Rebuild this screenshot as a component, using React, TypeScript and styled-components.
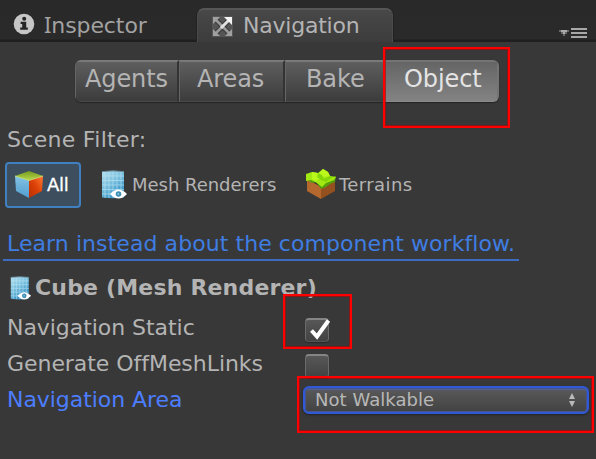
import React from "react";
import styled, { createGlobalStyle } from "styled-components";

const GlobalStyle = createGlobalStyle`
  * { box-sizing: border-box; }
  body { margin: 0; background: #383838; }
`;

const Window = styled.main`
  position: relative;
  width: 596px;
  height: 459px;
  overflow: hidden;
  background: #383838;
  color: #b4b4b4;
  font: 22px/31px "DejaVu Sans", Verdana, sans-serif;
  white-space: nowrap;
`;

const TabBar = styled.header`
  display: flex;
  align-items: flex-end;
  height: 42px;
  background: linear-gradient(#292929, #2a2a2a 39px, #1f1f1f 40px);
`;

const Tab = styled.div<{ $active?: boolean }>`
  display: flex;
  align-items: flex-start;
  width: ${(p) => (p.$active ? 196 : 197)}px;
  height: ${(p) => (p.$active ? 34 : 42)}px;
  padding: ${(p) => (p.$active ? "0 0 0 14px" : "10px 0 0 13px")};
  color: ${(p) => (p.$active ? "#b4b4b4" : "#a2a2a2")};
  ${(p) =>
    p.$active &&
    `background: linear-gradient(#484848, #3c3c3c);
     border: 1px solid #4a4a4a;
     border-top: 2px solid #565656;
     border-bottom: 0;
     border-radius: 7px 7px 0 0;
     box-shadow: -1px 0 #222, 1px 0 #222;`}
`;

const TabIcon = styled.span<{ $top: number }>`
  display: flex;
  padding-top: ${(p) => p.$top}px;
`;

const TabText = styled.span<{ $left: number; $spacing: number }>`
  height: 31px;
  margin-left: ${(p) => p.$left}px;
  letter-spacing: ${(p) => p.$spacing}px;
`;

const SerifCapital = styled.span`
  font-family: "Noto Sans", sans-serif;
  line-height: 1;
`;

const BarMenu = styled.div`
  flex: 1;
  display: flex;
  justify-content: flex-end;
  height: 42px;
  padding: 28px 9px 0 0;
`;

const Modes = styled.nav`
  display: grid;
  grid-template-columns: 104px 106px 100px 114px;
  width: 424px;
  height: 42px;
  margin: 18px 0 0 75px;
  border-radius: 6px;
  overflow: hidden;
  box-shadow: 0 1px 1px #252525;
`;

const Mode = styled.button<{ $on?: boolean; $left: number }>`
  border: 0;
  border-top: 2px solid ${(p) => (p.$on ? "#747474" : "#7a7a7a")};
  border-right: ${(p) => (p.$on ? "2px solid #747474" : "2px solid #333")};
  border-left: 1px solid #656565;
  border-bottom: 1px solid ${(p) => (p.$on ? "#8a8a8a" : "#484848")};
  background: ${(p) =>
    p.$on ? "linear-gradient(#656565, #838383)" : "linear-gradient(#5e5e5e, #3c3c3c)"};
  color: ${(p) => (p.$on ? "#e4e4e4" : "#b4b4b4")};
  font: 24px/35px "DejaVu Sans", Verdana, sans-serif;
  letter-spacing: -0.1px;
  text-align: left;
  padding: 0 0 4px ${(p) => p.$left}px;
`;

const SectionLabel = styled.div`
  margin-top: 22px;
  padding-left: 7px;
  letter-spacing: 0.3px;
`;

const Filters = styled.div`
  display: flex;
  height: 46px;
  margin: 7px 0 0 5px;
  font-size: 18px;
`;

const Filter = styled.div<{
  $on?: boolean;
  $width: number;
  $left: number;
  $gap: number;
  $spacing?: number;
}>`
  display: flex;
  align-items: center;
  gap: ${(p) => p.$gap}px;
  width: ${(p) => p.$width}px;
  padding: 0 0 2px ${(p) => p.$left}px;
  border: 2px solid ${(p) => (p.$on ? "#4080c0" : "transparent")};
  border-radius: 4px;
  background: ${(p) => (p.$on ? "#3d4e5e" : "transparent")};
  color: ${(p) => (p.$on ? "#fff" : "#b4b4b4")};
  letter-spacing: ${(p) => p.$spacing ?? 0}px;
  -webkit-text-stroke: ${(p) => (p.$on ? "0.3px #fff" : "0")};
`;

const HelpLink = styled.a`
  display: block;
  width: 516px;
  margin: 20px 0 0 3px;
  padding-left: 4px;
  border-bottom: 2px solid #3d6cc0;
  color: #3f7de2;
  letter-spacing: 0.07px;
`;

const ObjectTitle = styled.h1`
  display: flex;
  align-items: center;
  gap: 3px;
  margin: 11px 0 0;
  padding-left: 10px;
  font-size: 22px;
  font-weight: bold;
  letter-spacing: 0.18px;
`;

const Fields = styled.div`
  display: grid;
  gap: 5px;
  margin-top: 9px;
`;

const Field = styled.label<{ $active?: boolean }>`
  display: grid;
  grid-template-columns: 296px 1fr;
  height: 31px;
  padding-left: 7px;
  letter-spacing: -0.05px;
  color: ${(p) => (p.$active ? "#4c7eff" : "#b4b4b4")};
`;

const Check = styled.span`
  display: block;
  width: 24px;
  height: 24px;
  margin: 6px 0 0 2px;
  border: 1px solid #6b6b6b;
  border-top: 2px solid #858585;
  border-bottom-color: #555;
  border-radius: 4px;
  background: linear-gradient(#575757, #424242);
  box-shadow: 0 1px 1px #292929;
`;

const CheckMark = styled.svg`
  display: block;
  margin: -2px 0 0 2px;
  overflow: visible;
`;

const Select = styled.span`
  display: flex;
  align-items: center;
  justify-content: space-between;
  width: 286px;
  height: 28px;
  margin-top: 2px;
  padding: 0 11px 1px 10px;
  border: 2px solid #3058d8;
  border-radius: 6px;
  background: linear-gradient(#5a5a5a, #424242);
  box-shadow: inset 0 0 0 1px #44558c, inset 0 2px 1px #51609a, 0 1px 2px #222;
  color: #b8b8b8;
  font-size: 18px;
  letter-spacing: 0.05px;
`;

const Highlight = styled.div<{ $x: number; $y: number; $w: number; $h: number }>`
  position: absolute;
  left: ${(p) => p.$x}px;
  top: ${(p) => p.$y}px;
  width: ${(p) => p.$w}px;
  height: ${(p) => p.$h}px;
  border: 2px solid #fe0000;
  box-shadow: inset 0 0 0 1px rgba(190, 0, 0, 0.6);
  pointer-events: none;
`;

const InfoIcon = () => (
  <svg width="22" height="22" viewBox="0 0 22 22">
    <circle cx="11" cy="11" r="10.3" fill="#c6c6c6" />
    <circle cx="11.2" cy="5.8" r="2" fill="#252525" />
    <path d="M7.6 8.8h5.6v5.6h1.6v2.4H7.2v-2.4h2V11H7.6z" fill="#252525" />
  </svg>
);

const NavIcon = () => (
  <svg width="21" height="21" viewBox="0 0 21 21">
    <rect width="21" height="21" fill="#555" />
    <path d="M4 4l13 13M4 17L17 4" stroke="#3a3a3a" strokeWidth="5" />
    <path d="M4 4l13 13M4 17L10 11" stroke="#989898" strokeWidth="2.8" />
    <path d="M1 1h7L1 8zM1 20v-7l7 7zM20 20h-7l7-7z" fill="#a0a0a0" />
    <path d="M9 12l8-8" stroke="#e0e0e0" strokeWidth="3" />
    <path d="M12 1h8v8z" fill="#f4f4f4" />
  </svg>
);

const MenuIcon = () => (
  <svg width="28" height="12" viewBox="0 0 28 12">
    <path d="M0 2h10v2H8v2H6v2H4V6H2V4H0z" fill="#686868" />
    <path d="M2 2h6v2H6v2H4V4H2z" fill="#aaa" />
    <path d="M12 0h16v2H12zM12 4h16v2H12zM12 8h16v2H12z" fill="#a8a8a8" />
  </svg>
);

const CubeIcon = () => (
  <svg width="28" height="27" viewBox="0 0 28 27">
    <defs>
      <linearGradient id="cubeTop" x1="0" x2="0" y1="0" y2="1">
        <stop stopColor="#789b20" />
        <stop offset="1" stopColor="#b5d94b" />
      </linearGradient>
      <linearGradient id="cubeRight" x1="1" x2="0" y1="0" y2="1">
        <stop stopColor="#ff7b32" />
        <stop offset=".5" stopColor="#dc4107" />
        <stop offset="1" stopColor="#b92f00" />
      </linearGradient>
      <linearGradient id="cubeLeft" x1="0" x2="0" y1="0" y2="1">
        <stop stopColor="#83c2e5" />
        <stop offset="1" stopColor="#529ecf" />
      </linearGradient>
    </defs>
    <path d="M14 0L28 5L14 9.5L0 5z" fill="url(#cubeTop)" />
    <path d="M0 5l14 4.5V27L1 20z" fill="url(#cubeLeft)" />
    <path d="M14 9.5L28 5l-1 15-13 7z" fill="url(#cubeRight)" />
    <path d="M0 5l14 4.5L28 5" fill="none" stroke="#d2e784" strokeWidth=".8" />
  </svg>
);

const MeshIcon = ({ small = false }: { small?: boolean }) => (
  <svg
    width={small ? 22 : 27}
    height={small ? 24 : 29}
    viewBox="0 0 27 29"
    preserveAspectRatio="none"
  >
    <defs>
      <linearGradient id="meshFill" x1="0" x2=".6" y1="0" y2="1">
        <stop stopColor="#b4e0f0" />
        <stop offset=".5" stopColor="#78bfde" />
        <stop offset="1" stopColor="#2f8fc5" />
      </linearGradient>
    </defs>
    <path d="M1 1.5Q12 .2 23 1.5V27.5Q12 29 1 27.5z" fill="url(#meshFill)" />
    <path
      d="M4 2v26M8 2v26M12 2v26M16 2v26M20 2v26M1 6h22M1 10.5h22M1 15h22M1 19.5h22M1 24h22"
      stroke="#bfe5f3"
      strokeWidth=".9"
      opacity=".7"
    />
    <path d="M1 1.6Q12 .2 23 1.6" stroke="#668795" fill="none" />
    <path d="M9 24Q17.5 15 26 24Q17.5 33 9 24z" fill="#fff" />
    <circle cx="17.5" cy="24" r="2.8" fill="#3b8eb4" />
    <circle cx="17.3" cy="24" r="1" fill="#8fc4dc" />
  </svg>
);

const TerrainIcon = () => (
  <svg width="31" height="30" viewBox="0 0 31 30">
    <path d="M1 10l14 8v12L1 22z" fill="#b5682e" />
    <path d="M15 18l14-7v11L15 30z" fill="#94501f" />
    <path d="M0 5l1 6 5 3 4-1 5 7 5-2 4-3 5-2 1-6-15 5z" fill="#559d0b" />
    <path d="M0 5l6-2 6 1 5-4 5 3 2 4 6 1-2 3-8 3-4 4-5-4-6-3-5 1z" fill="#a2e912" />
    <path d="M6 3l6 1 2 5-4 3-4-2zM17 0l5 3 2 4-7 1-5-3z" fill="#baf81c" />
    <path d="M12 4l4 2 2 4 6-3 3 1-7 5-5-2-4-3z" fill="#84d609" />
  </svg>
);

const SelectArrows = () => (
  <svg width="8" height="14" viewBox="0 0 8 14">
    <path d="M4 0l3 6H1zM4 14L1 8h6z" fill="#bababa" />
  </svg>
);

export default function App() {
  return (
    <>
      <GlobalStyle />
      <Window>
        <TabBar>
          <Tab>
            <TabIcon $top={3}><InfoIcon /></TabIcon>
            <TabText $left={9} $spacing={-0.1}>
              <SerifCapital>I</SerifCapital>nspector
            </TabText>
          </Tab>
          <Tab $active>
            <TabIcon $top={6}><NavIcon /></TabIcon>
            <TabText $left={10} $spacing={-0.22}>Navigation</TabText>
          </Tab>
          <BarMenu><MenuIcon /></BarMenu>
        </TabBar>
        <Modes>
          <Mode $left={9}>Agents</Mode>
          <Mode $left={17}>Areas</Mode>
          <Mode $left={20}>Bake</Mode>
          <Mode $left={18} $on>Object</Mode>
        </Modes>
        <SectionLabel>Scene Filter:</SectionLabel>
        <Filters>
          <Filter $on $width={76} $left={8} $gap={4} $spacing={-0.3}><CubeIcon />All</Filter>
          <Filter $width={206} $left={18} $gap={4} $spacing={-0.03}><MeshIcon />Mesh Renderers</Filter>
          <Filter $width={140} $left={17} $gap={2} $spacing={0.4}><TerrainIcon />Terrains</Filter>
        </Filters>
        <HelpLink>Learn instead about the component workflow.</HelpLink>
        <ObjectTitle><MeshIcon small />Cube (Mesh Renderer)</ObjectTitle>
        <Fields>
          <Field>
            Navigation Static
            <Check>
              <CheckMark width="22" height="22" viewBox="0 0 22 22">
                <path d="M3.5 12.5L9 18.5L20.5 2.5" fill="none" stroke="#fff" strokeWidth="4" />
              </CheckMark>
            </Check>
          </Field>
          <Field>Generate OffMeshLinks<Check /></Field>
          <Field $active>
            Navigation Area
            <Select>Not Walkable<SelectArrows /></Select>
          </Field>
        </Fields>
        <Highlight $x={383} $y={47} $w={127} $h={81} />
        <Highlight $x={283} $y={294} $w={69} $h={55} />
        <Highlight $x={297} $y={376} $w={297} $h={57} />
      </Window>
    </>
  );
}
